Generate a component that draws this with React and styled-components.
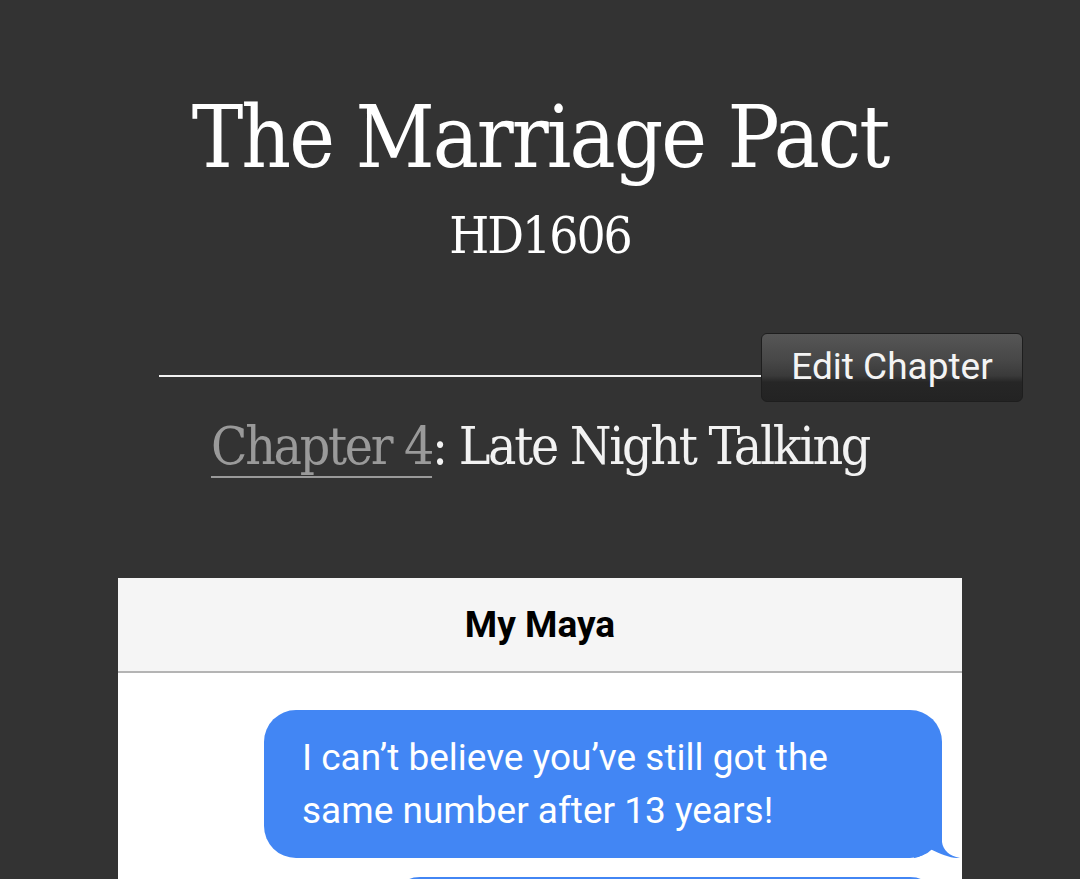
import React from "react";
import styled, { createGlobalStyle } from "styled-components";

const Global = createGlobalStyle`
  html, body { margin: 0; padding: 0; background: #333333; }
  body { overflow: hidden; }
`;

const serif = `"DejaVu Serif Condensed", "DejaVu Serif", "Liberation Serif", serif`;
const sans = `Roboto, "Noto Sans", sans-serif`;

const Page = styled.div`
  width: 1080px;
  min-height: 879px;
  background: #333333;
  padding-top: 87px;
  box-sizing: border-box;
`;

const Title = styled.h1`
  margin: 0;
  text-align: center;
  font-family: ${serif};
  font-stretch: condensed;
  font-weight: 400;
  font-size: 86px;
  letter-spacing: -2px;
  line-height: 100px;
  color: #ffffff;
`;

const Author = styled.div`
  text-align: center;
  font-family: ${serif};
  font-stretch: condensed;
  font-size: 51px;
  letter-spacing: -2px;
  line-height: 60px;
  color: #ffffff;
  margin-top: 19px;
`;

const Toolbar = styled.div`
  display: flex;
  align-items: center;
  margin: 67px 57px 0 159px;
`;

const Rule = styled.div`
  flex: 1;
  height: 2px;
  background: #f2f2f2;
  margin-top: 16px;
`;

const EditButton = styled.button`
  width: 262px;
  height: 69px;
  border-radius: 6px;
  border: 1px solid #1e1e1e;
  background: linear-gradient(#565656 0%, #474747 40%, #3a3a3a 62%, #262626 72%, #232323 100%);
  color: #f4f4f4;
  font-family: ${sans};
  font-size: 37px;
  padding: 0 0 2px;
`;

const ChapterHeading = styled.h2`
  margin: 9px 0 0;
  text-align: center;
  font-family: ${serif};
  font-stretch: condensed;
  font-weight: 400;
  font-size: 53px;
  letter-spacing: -2.3px;
  line-height: 70px;
  color: #f2f2f2;
`;

const ChapterLink = styled.span`
  color: #9a9a9a;
  text-decoration: underline;
  text-decoration-thickness: 2px;
  text-underline-offset: 12px;
`;

const Chat = styled.section`
  width: 844px;
  margin: 97px auto 0;
  background: #ffffff;
`;

const ChatHeader = styled.header`
  height: 93px;
  background: #f5f5f5;
  border-bottom: 2px solid #b4b4b4;
  display: flex;
  align-items: center;
  justify-content: center;
  font-family: ${sans};
  font-weight: 700;
  font-size: 37px;
  color: #000000;
`;

const Thread = styled.div`
  display: flex;
  flex-direction: column;
  align-items: flex-end;
  gap: 19px;
  padding: 37px 20px 0 0;
`;

const Bubble = styled.div`
  position: relative;
  box-sizing: border-box;
  width: ${(p) => p.$width}px;
  padding: 21px 38px;
  border-radius: 32px;
  background: #4286f4;
  color: #ffffff;
  font-family: ${sans};
  font-size: 37px;
  line-height: 53px;
`;

/* iMessage-style tail hanging off the bubble's bottom-right corner */
const Tail = styled.svg`
  position: absolute;
  right: -18px;
  bottom: 0;
  width: 46px;
  height: 34px;
`;

export default function App() {
  return (
    <Page>
      <Global />
      <Title>The Marriage Pact</Title>
      <Author>HD1606</Author>
      <Toolbar>
        <Rule />
        <EditButton>Edit Chapter</EditButton>
      </Toolbar>
      <ChapterHeading>
        <ChapterLink>Chapter 4</ChapterLink>: Late Night Talking
      </ChapterHeading>
      <Chat>
        <ChatHeader>My Maya</ChatHeader>
        <Thread>
          <Bubble $width={678}>
            I can’t believe you’ve still got the same number after 13 years!
            <Tail viewBox="0 0 46 34">
              <path
                d="M28 0 L28 18 C29 26 35 32 46 34 C38 34.5 28 31 16 25 C12 30 6 33 0 34 L0 0 Z"
                fill="#4286f4"
              />
            </Tail>
          </Bubble>
          <Bubble $width={554}>&nbsp;</Bubble>
        </Thread>
      </Chat>
    </Page>
  );
}
